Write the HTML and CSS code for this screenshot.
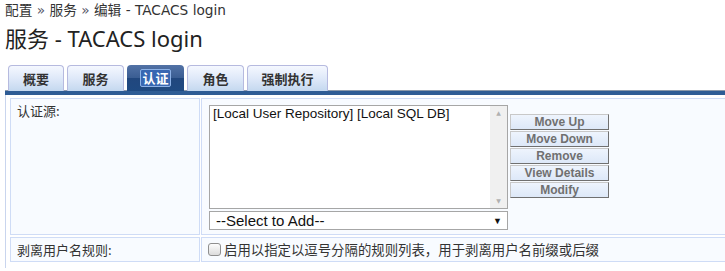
FILE: index.html
```html
<!DOCTYPE html>
<html lang="zh">
<head>
    <meta charset="UTF-8">
    <title>服务 - TACACS login</title>
    <link rel="stylesheet" href="styles.css">
</head>
<body>
    <div class="crumbs">配置 <span class="sep">»</span> 服务 <span class="sep">»</span> 编辑 - TACACS login</div>
    <h1 class="title">服务 - TACACS login</h1>

    <div class="tabs">
        <div class="tab t1">概要</div>
        <div class="tab t2">服务</div>
        <div class="tab t3 active"><span class="focus">认证</span></div>
        <div class="tab t4">角色</div>
        <div class="tab t5">强制执行</div>
    </div>
    <div class="tabbar"></div>

    <div class="panel">
        <div class="grid">
            <div class="cell label">认证源:</div>
            <div class="cell value">
                <div class="sources">
                    <div class="picker">
                        <div class="listbox">
                            <div class="items">[Local User Repository] [Local SQL DB]</div>
                            <div class="scroll">
                                <span class="arr">▲</span>
                                <span class="arr">▼</span>
                            </div>
                        </div>
                        <div class="dropdown">
                            <span>--Select to Add--</span>
                            <span class="caret">▼</span>
                        </div>
                    </div>
                    <div class="buttons">
                        <button type="button" class="btn">Move Up</button>
                        <button type="button" class="btn">Move Down</button>
                        <button type="button" class="btn">Remove</button>
                        <button type="button" class="btn">View Details</button>
                        <button type="button" class="btn">Modify</button>
                    </div>
                </div>
            </div>
            <div class="cell label">剥离用户名规则:</div>
            <div class="cell value check">
                <span class="box"></span>
                <span>启用以指定以逗号分隔的规则列表，用于剥离用户名前缀或后缀</span>
            </div>
        </div>
    </div>
</body>
</html>
```

FILE: styles.css
```css
body {
    margin: 0;
    padding: 0 0 0 5px;
    font-family: "DejaVu Sans", "Noto Sans CJK SC", sans-serif;
    color: #333;
    background: #fff;
    overflow: hidden;
}
.crumbs {
    font-size: 13.7px;
    line-height: 20px;
    color: #333;
}
.sep {
    color: #556;
}
.title {
    font-family: "Noto Sans", "Noto Sans CJK SC", sans-serif;
    font-weight: normal;
    font-size: 22px;
    line-height: 32px;
    margin: 2px 0 0 0;
    color: #222;
}
.tabs {
    display: flex;
    gap: 3px;
    margin: 11px 0 0 3px;
    height: 26px;
}
.tab {
    box-sizing: border-box;
    height: 26px;
    border: 1px solid #b6badf;
    border-bottom: none;
    border-radius: 4px 4px 0 0;
    background: linear-gradient(#f5f8ff, #dce7f8 55%, #c4d8ef);
    font-family: "Noto Sans CJK SC", sans-serif;
    font-weight: bold;
    font-size: 13px;
    line-height: 25px;
    text-align: center;
    color: #333;
}
.t1 { width: 56px; }
.t2 { width: 57px; }
.t3 { width: 57px; }
.t4 { width: 57px; }
.t5 { width: 81px; }
.tab.active {
    border: none;
    background: linear-gradient(#5272a6, #3a5d92 50%, #21477e 51%, #1f4a82);
    color: #fff;
}
.focus {
    display: inline-block;
    line-height: 16px;
    padding: 0 1px;
    margin-top: 4px;
    background: #3867b2;
    border: 1px solid #8cb1e6;
    border-radius: 2px;
}
.tabbar {
    height: 4px;
    background: #2e5c95;
    border-top: 1px solid #8a98aa;
    margin-top: -1px;
}
.panel {
    border-left: 1px solid #c9d5ee;
    padding: 3px 0 0 4px;
    height: 170px;
}
.grid {
    display: grid;
    grid-template-columns: 190px 1fr;
    gap: 2px 1px;
}
.cell {
    border: 1px solid #cfdcf6;
    background: #f8fbff;
    font-size: 13px;
}
.label {
    font-family: "Noto Sans CJK SC", sans-serif;
    padding: 3px 6px;
    line-height: 17px;
    color: #333;
}
.value {
    border-right: none;
    padding: 6px 7px 4px 7px;
}
.sources {
    display: flex;
    align-items: flex-start;
    gap: 2px;
}
.picker {
    display: flex;
    flex-direction: column;
    gap: 2px;
}
.listbox {
    box-sizing: border-box;
    width: 299px;
    height: 104px;
    border: 1px solid #a6a6a6;
    background: #fff;
    display: flex;
}
.items {
    flex: 1;
    font-family: "Liberation Sans", Arial, sans-serif;
    font-size: 13.5px;
    line-height: 16px;
    padding: 0 3px;
    color: #111;
}
.scroll {
    width: 17px;
    background: #f0f0f0;
    display: flex;
    flex-direction: column;
    justify-content: space-between;
    align-items: center;
    padding: 3px 0;
}
.arr {
    font-size: 6px;
    color: #b0b0b0;
    line-height: 8px;
}
.dropdown {
    box-sizing: border-box;
    width: 299px;
    height: 19px;
    border: 1px solid #a6a6a6;
    background: #fff;
    display: flex;
    justify-content: space-between;
    align-items: center;
    padding: 0 5px 0 6px;
    font-family: "Liberation Sans", Arial, sans-serif;
    font-size: 15px;
    color: #111;
}
.caret {
    font-size: 9px;
    color: #111;
}
.buttons {
    display: flex;
    flex-direction: column;
    gap: 1px;
    margin-top: 9px;
}
.btn {
    box-sizing: border-box;
    width: 99px;
    height: 16px;
    padding: 0;
    border: 1px solid;
    border-color: #c8c8c8 #707070 #707070 #c8c8c8;
    background: linear-gradient(#eef4fd, #dde8f8);
    font-family: "Liberation Sans", Arial, sans-serif;
    font-weight: bold;
    font-size: 12px;
    line-height: 14px;
    color: #707070;
}
.check {
    display: flex;
    align-items: center;
    gap: 3px;
    padding: 2px 6px;
    font-family: "Noto Sans CJK SC", sans-serif;
    font-size: 13.4px;
    line-height: 19px;
}
.box {
    box-sizing: border-box;
    width: 13px;
    height: 13px;
    border: 1px solid #8f8f8f;
    border-radius: 3px;
    background: linear-gradient(#fdfdfd, #dcdcdc);
}
```
